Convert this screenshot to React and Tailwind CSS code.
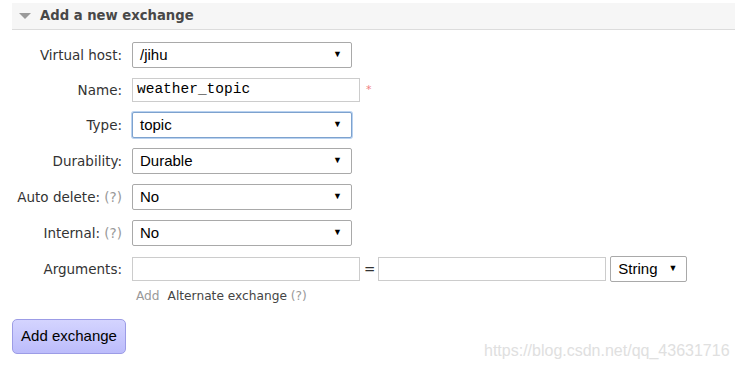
import React from "react";

const labelCls = "w-[122px] shrink-0 text-right text-[13.5px] text-[#333]";
const q = <span className="text-[#999]">(?)</span>;

function Select({ value, focused, w = "w-[220px]" }) {
  return (
    <div
      className={`${w} h-[26px] flex items-center justify-between pl-[7px] pr-[9px] bg-white border ${
        focused ? "border-[#7da2ce] shadow-[0_0_0_1px_#b9d2f0]" : "border-[#a9a9a9]"
      } rounded-[2px] text-[15px] text-black`}
      style={{ fontFamily: '"Liberation Sans", Arial, sans-serif' }}
    >
      <span>{value}</span>
      <span className="text-[9px] text-black">▼</span>
    </div>
  );
}

function Input({ value = "", mono }) {
  return (
    <div
      className="w-[228px] h-[24px] flex items-center px-[4px] bg-white border border-[#cccccc] text-[14.5px] text-black"
      style={{ fontFamily: mono ? '"Liberation Mono", "Courier New", monospace' : '"Liberation Sans", Arial, sans-serif' }}
    >
      {value}
    </div>
  );
}

function Row({ label, children }) {
  return (
    <div className="flex items-center gap-[10px]">
      <div className={labelCls}>{label}</div>
      {children}
    </div>
  );
}

export default function App() {
  return (
    <div
      className="relative w-[737px] h-[367px] bg-white overflow-hidden"
      style={{ fontFamily: '"DejaVu Sans", Verdana, sans-serif' }}
    >
      <div className="ml-[12px] mr-[2px] mt-[3px] h-[27px] bg-[#f6f6f6] border-b border-[#dcdcdc] flex items-center">
        <svg width="14" height="8" viewBox="0 0 14 8" className="ml-[6px] mr-[8px]">
          <polygon points="1,1 13,1 7,7" fill="#9a9a9a" />
        </svg>
        <span className="font-bold text-[13.2px] text-[#484848]">Add a new exchange</span>
      </div>

      <div className="flex flex-col gap-[10px] pt-[12px]">
        <Row label="Virtual host:">
          <Select value="/jihu" />
        </Row>
        <Row label="Name:">
          <div className="flex items-center">
            <Input value="weather_topic" mono />
            <span className="ml-[6px] text-[11px] text-[#f08080] leading-none mt-[-2px]">*</span>
          </div>
        </Row>
        <Row label="Type:">
          <Select value="topic" focused />
        </Row>
        <Row label="Durability:">
          <Select value="Durable" />
        </Row>
        <Row label={<>Auto delete: {q}</>}>
          <Select value="No" />
        </Row>
        <Row label={<>Internal: {q}</>}>
          <Select value="No" />
        </Row>
        <Row label="Arguments:">
          <div className="flex items-center">
            <Input />
            <span className="ml-[4px] mr-[3px] text-[13.5px] text-[#333]">=</span>
            <Input />
            <div className="ml-[4px]">
              <Select value="String" w="w-[77px]" />
            </div>
          </div>
        </Row>
      </div>

      <div className="ml-[136px] mt-[5px] h-[18px] text-[12.2px] flex items-center gap-[8px]">
        <span className="text-[#999]">Add</span>
        <span className="text-[#444]">
          Alternate exchange <span className="text-[#999]">(?)</span>
        </span>
      </div>

      <div className="ml-[12px] mt-[14px]">
        <button
          className="w-[114px] h-[35px] rounded-[5px] border border-[#9c9ce6] bg-gradient-to-b from-[#d4d4ff] to-[#bcbcfb] text-[15px] text-black"
          style={{ fontFamily: '"Liberation Sans", Arial, sans-serif' }}
        >
          Add exchange
        </button>
      </div>

      <div
        className="absolute left-[484px] top-[339px] text-[16px] text-[#e0e0e0]"
        style={{ fontFamily: '"Liberation Sans", Arial, sans-serif' }}
      >
        https://blog.csdn.net/qq_43631716
      </div>
    </div>
  );
}
